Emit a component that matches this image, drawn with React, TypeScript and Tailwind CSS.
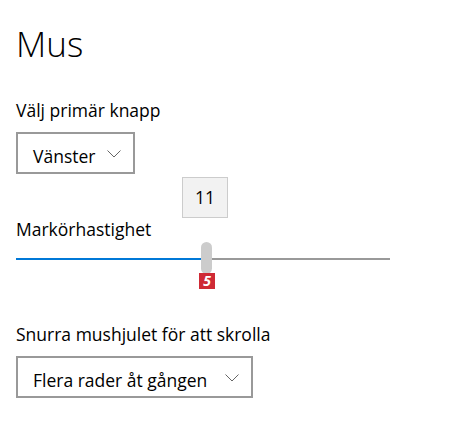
import React from "react";

function Chevron() {
  return (
    <svg width="14" height="8" viewBox="0 0 14 8" aria-hidden="true">
      <path d="M0.5 0.5 L7 7 L13.5 0.5" fill="none" stroke="#666666" strokeWidth="1" />
    </svg>
  );
}

function Dropdown({ label, width }: { label: string; width: string }) {
  return (
    <div
      className={`flex h-[42px] items-center justify-between border-2 border-[#999999] bg-white pl-[15px] pr-[12px] pt-[5px] text-[17.5px] leading-[24px] text-black ${width}`}
    >
      <span>{label}</span>
      <span className="pb-[4px]">
        <Chevron />
      </span>
    </div>
  );
}

export default function App() {
  // Markörhastighet 1–20, thumb placed along the track minus the thumb width
  const value = 11;
  const thumbLeft = Math.round(((value - 1) / 19.6) * 363);

  return (
    <div
      className="min-h-[428px] w-[462px] bg-white pl-[16px] pt-[20px] text-black"
      style={{ fontFamily: '"Open Sans", "Noto Sans", sans-serif' }}
    >
      <h1 className="text-[35px] font-light leading-[48px]">Mus</h1>

      <p className="mt-[30px] text-[17.5px] leading-[24px]">Välj primär knapp</p>
      <div className="mt-[10px]">
        <Dropdown label="Vänster" width="w-[119px]" />
      </div>

      <div className="relative mt-[43px] w-[374px]">
        <div className="absolute left-[166px] top-[-40px] flex h-[41px] w-[46px] items-center justify-center border border-[#cccccc] bg-[#f2f2f2] text-[17.5px]">
          {value}
        </div>
        <p className="text-[17.5px] leading-[24px]">Markörhastighet</p>
        <div className="relative mt-[1px] h-[32px]">
          <div className="absolute left-0 right-0 top-[16px] flex h-[2px]">
            <div className="h-full bg-[#0078d7]" style={{ width: thumbLeft + 1 }} />
            <div className="h-full flex-1 bg-[#999999]" />
          </div>
          <div
            className="absolute top-0 h-[32px] w-[11px] rounded-full bg-[#cccccc]"
            style={{ left: thumbLeft }}
          />
          <div className="absolute left-[183px] top-[31px] flex h-[16px] w-[16px] items-center justify-center bg-[#cf2a35] text-[14px] font-bold italic leading-none text-white">
            5
          </div>
        </div>
      </div>

      <p className="mt-[48px] text-[17.5px] leading-[24px]">Snurra mushjulet för att skrolla</p>
      <div className="mt-[10px]">
        <Dropdown label="Flera rader åt gången" width="w-[237px]" />
      </div>
    </div>
  );
}
